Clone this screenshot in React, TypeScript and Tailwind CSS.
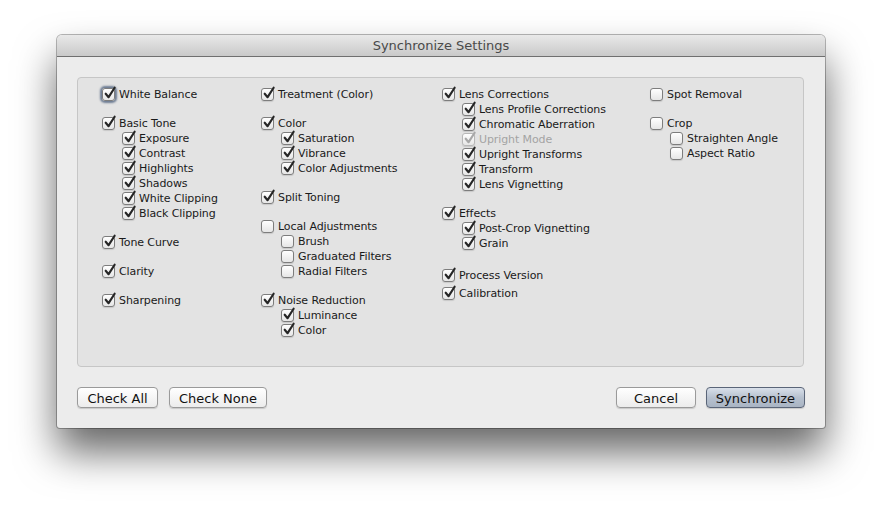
import React from 'react';

type Item = { label: string; checked: boolean; disabled?: boolean; focus?: boolean };
type Group = { head: Item; children?: Item[]; gap?: string };

const on = (label: string, extra: Partial<Item> = {}): Item => ({ label, checked: true, ...extra });
const off = (label: string): Item => ({ label, checked: false });

const columns: { width: string; groups: Group[] }[] = [
  {
    width: 'w-[159px]',
    groups: [
      { head: on('White Balance', { focus: true }) },
      {
        head: on('Basic Tone'),
        children: ['Exposure', 'Contrast', 'Highlights', 'Shadows', 'White Clipping', 'Black Clipping'].map((l) => on(l)),
      },
      { head: on('Tone Curve') },
      { head: on('Clarity') },
      { head: on('Sharpening') },
    ],
  },
  {
    width: 'w-[181px]',
    groups: [
      { head: on('Treatment (Color)') },
      { head: on('Color'), children: ['Saturation', 'Vibrance', 'Color Adjustments'].map((l) => on(l)) },
      { head: on('Split Toning') },
      { head: off('Local Adjustments'), children: ['Brush', 'Graduated Filters', 'Radial Filters'].map(off) },
      { head: on('Noise Reduction'), children: [on('Luminance'), on('Color')] },
    ],
  },
  {
    width: 'w-[208px]',
    groups: [
      {
        head: on('Lens Corrections'),
        children: [
          on('Lens Profile Corrections'),
          on('Chromatic Aberration'),
          on('Upright Mode', { disabled: true }),
          on('Upright Transforms'),
          on('Transform'),
          on('Lens Vignetting'),
        ],
      },
      { head: on('Effects'), children: [on('Post-Crop Vignetting'), on('Grain')] },
      { head: on('Process Version'), gap: 'mt-[17px]' },
      { head: on('Calibration'), gap: 'mt-[3px]' },
    ],
  },
  {
    width: 'flex-1',
    groups: [
      { head: off('Spot Removal') },
      { head: off('Crop'), children: [off('Straighten Angle'), off('Aspect Ratio')] },
    ],
  },
];

const Box = ({ item }: { item: Item }) => (
  <span
    className={`relative flex h-[13px] w-[13px] shrink-0 items-center justify-center rounded-[3px] border bg-gradient-to-b from-white to-[#e6e6e6] ${
      item.disabled ? 'border-[#b8b8b8]' : 'border-[#7d7d7d]'
    } ${item.focus ? 'shadow-[0_0_2px_2px_rgba(70,90,120,0.75)]' : 'shadow-[0_1px_1px_rgba(0,0,0,0.12)]'}`}
  >
    {item.checked && (
      <svg viewBox="0 0 13 13" className="absolute left-[0px] top-[-3px] h-[14px] w-[14px]">
        <path
          d="M2.5 7.2 L5.2 10.4 L10.8 1.6"
          fill="none"
          stroke={item.disabled ? '#a8a8a8' : '#262626'}
          strokeWidth="2"
          strokeLinecap="round"
          strokeLinejoin="round"
        />
      </svg>
    )}
  </span>
);

const Row = ({ item, indent }: { item: Item; indent?: boolean }) => (
  <div className={`flex h-[15px] items-center gap-[4px] ${indent ? 'pl-[20px]' : ''}`}>
    <Box item={item} />
    <span
      className={`whitespace-nowrap leading-[15px] tracking-[-0.1px] ${
        item.disabled ? 'text-[#a3a3a3]' : 'text-[#1a1a1a]'
      }`}
    >
      {item.label}
    </span>
  </div>
);

const Button = ({ label, width, primary }: { label: string; width: string; primary?: boolean }) => (
  <button
    className={`flex h-[21px] ${width} items-center justify-center rounded-[4px] border pt-[2px] text-[13px] leading-none ${
      primary
        ? 'border-[#5a6578] bg-gradient-to-b from-[#d9e0ea] via-[#b7c1cf] to-[#a9b4c3] text-[#111]'
        : 'border-[#9a9a9a] bg-gradient-to-b from-white to-[#ececec] text-[#111]'
    } shadow-[0_1px_1px_rgba(0,0,0,0.15)]`}
  >
    {label}
  </button>
);

export default function App() {
  return (
    <div
      className="min-h-[507px] bg-white pl-[57px] pt-[35px]"
      style={{ fontFamily: '"DejaVu Sans", "Liberation Sans", sans-serif' }}
    >
      <div className="flex h-[393px] w-[768px] flex-col overflow-hidden rounded-t-[5px] rounded-b-[3px] bg-[#ececec] shadow-[0_24px_40px_rgba(0,0,0,0.6),0_0_0_1px_rgba(0,0,0,0.28)]">
        <div className="flex h-[22px] shrink-0 items-center justify-center border-b border-[#6f6f6f] bg-gradient-to-b from-[#e9e9e9] to-[#c9c9c9] text-[13px] text-[#4a4a4a]">
          Synchronize Settings
        </div>
        <div className="flex flex-1 flex-col px-[20px] pt-[20px]">
          <div className="flex h-[290px] w-[727px] rounded-[4px] border border-[#c6c6c6] bg-[#e3e3e3] pl-[24px] pt-[9px] text-[11px]">
            {columns.map((col, ci) => (
              <div key={ci} className={`flex flex-col ${col.width}`}>
                {col.groups.map((g, gi) => (
                  <div key={gi} className={g.gap ? g.gap : gi > 0 ? 'mt-[14px]' : ''}>
                    <Row item={g.head} />
                    {g.children?.map((c) => (
                      <Row key={c.label} item={c} indent />
                    ))}
                  </div>
                ))}
              </div>
            ))}
          </div>
          <div className="mt-[20px] flex items-center">
            <Button label="Check All" width="w-[81px]" />
            <div className="w-[11px]" />
            <Button label="Check None" width="w-[98px]" />
            <div className="flex-1" />
            <Button label="Cancel" width="w-[80px]" />
            <div className="w-[10px]" />
            <Button label="Synchronize" width="w-[99px]" primary />
          </div>
        </div>
      </div>
    </div>
  );
}
